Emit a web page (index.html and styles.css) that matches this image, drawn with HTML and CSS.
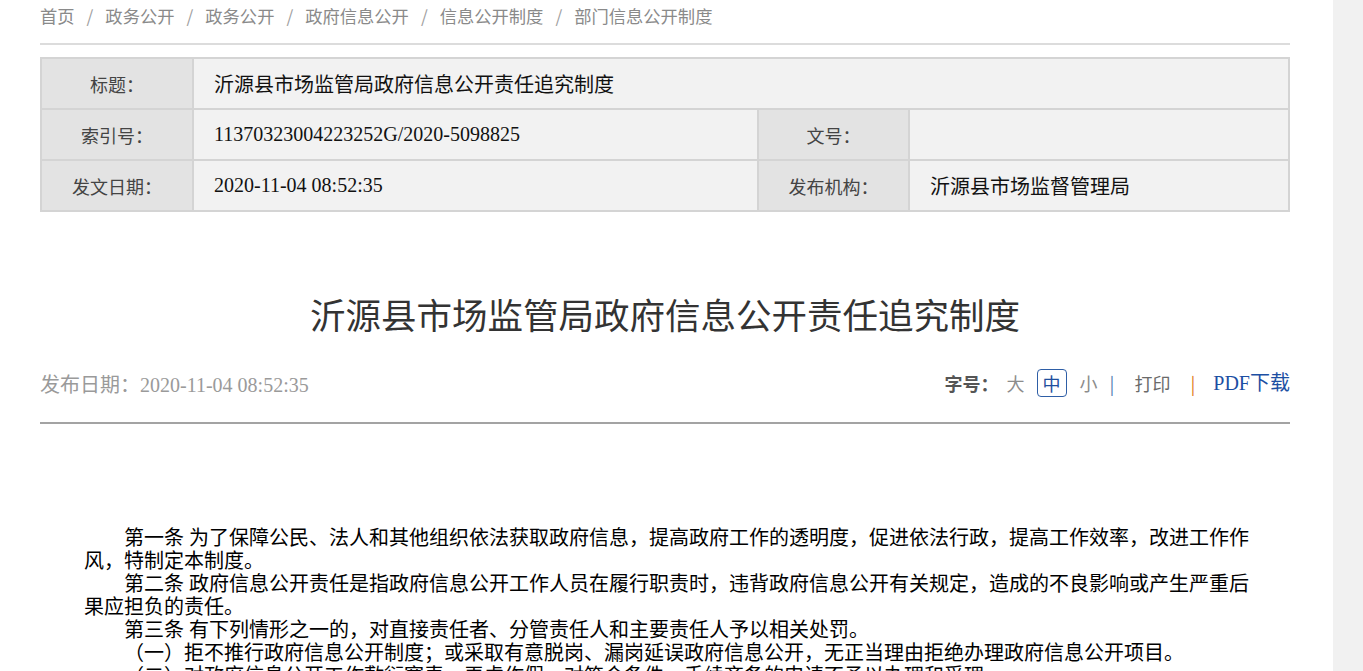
FILE: index.html
```html
<!DOCTYPE html>
<html lang="zh-CN">
<head>
<meta charset="utf-8">
<title>沂源县市场监管局政府信息公开责任追究制度</title>
<link rel="stylesheet" href="styles.css">
</head>
<body>
<div class="page">
  <main class="main">
    <div class="wrap">
      <nav class="crumbs">
        <a href="#">首页</a><span class="sep">/</span><a href="#">政务公开</a><span class="sep">/</span><a href="#">政务公开</a><span class="sep">/</span><a href="#">政府信息公开</a><span class="sep">/</span><a href="#">信息公开制度</a><span class="sep">/</span><a href="#">部门信息公开制度</a>
      </nav>

      <table class="meta">
        <colgroup>
          <col class="c-label"><col class="c-val1"><col class="c-label2"><col>
        </colgroup>
        <tr>
          <th>标题：</th>
          <td colspan="3">沂源县市场监管局政府信息公开责任追究制度</td>
        </tr>
        <tr>
          <th>索引号：</th>
          <td>11370323004223252G/2020-5098825</td>
          <th>文号：</th>
          <td></td>
        </tr>
        <tr>
          <th>发文日期：</th>
          <td>2020-11-04 08:52:35</td>
          <th>发布机构：</th>
          <td>沂源县市场监督管理局</td>
        </tr>
      </table>

      <h1 class="title">沂源县市场监管局政府信息公开责任追究制度</h1>

      <div class="info">
        <div class="date">发布日期：2020-11-04 08:52:35</div>
        <div class="tools">
          <span class="fs-label">字号：</span>
          <a class="fs" href="#">大</a>
          <a class="fs fs-on" href="#">中</a>
          <a class="fs" href="#">小</a>
          <span class="bar">|</span>
          <a class="print" href="#">打印</a>
          <span class="bar bar-o">|</span>
          <a class="pdf" href="#">PDF下载</a>
        </div>
      </div>

      <article class="content">
        <p>第一条 为了保障公民、法人和其他组织依法获取政府信息，提高政府工作的透明度，促进依法行政，提高工作效率，改进工作作风，特制定本制度。</p>
        <p>第二条 政府信息公开责任是指政府信息公开工作人员在履行职责时，违背政府信息公开有关规定，造成的不良影响或产生严重后果应担负的责任。</p>
        <p>第三条 有下列情形之一的，对直接责任者、分管责任人和主要责任人予以相关处罚。</p>
        <p>（一）拒不推行政府信息公开制度；或采取有意脱岗、漏岗延误政府信息公开，无正当理由拒绝办理政府信息公开项目。</p>
        <p>（二）对政府信息公开工作敷衍塞责，弄虚作假，对符合条件、手续齐备的申请不予以办理和受理。</p>
        <p>（三）违反规定收取费用或者谋取不正当利益的。</p>
      </article>
    </div>
  </main>
  <aside class="rail"></aside>
</div>
</body>
</html>
```

FILE: styles.css
```css
html, body {
  margin: 0;
  padding: 0;
  background: #fff;
}

body {
  font-family: "Liberation Serif", "Noto Sans CJK SC", serif;
  color: #222;
  height: 671px;
  overflow: hidden;
}

a {
  text-decoration: none;
  color: inherit;
}

.page {
  display: flex;
  min-height: 671px;
}

.main {
  flex: 1;
  min-width: 0;
}

.rail {
  width: 30px;
  flex: none;
  background: #f1f1f1;
}

.wrap {
  width: 1250px;
  margin-left: 40px;
}

/* breadcrumb */
.crumbs {
  font-family: "Noto Sans CJK SC", sans-serif;
  font-size: 17.3px;
  line-height: 32px;
  color: #8a8a8a;
  padding-bottom: 11px;
  border-bottom: 2px solid #dcdcdc;
  white-space: nowrap;
}

.crumbs .sep {
  padding: 0 12px;
  color: #a0a0a0;
}

/* meta table */
.meta {
  width: 100%;
  margin-top: 12px;
  border-collapse: collapse;
  table-layout: fixed;
  border: 2px solid #d4d4d4;
}

.c-label { width: 152px; }
.c-val1 { width: 565px; }
.c-label2 { width: 151px; }

.meta th,
.meta td {
  height: 49px;
  border: 2px solid #d4d4d4;
  padding: 0;
}

.meta th {
  background: #e3e3e3;
  font-family: "Noto Sans CJK SC", sans-serif;
  font-weight: normal;
  font-size: 18px;
  color: #444;
  text-align: center;
}

.meta td {
  background: #f2f2f2;
  font-size: 20px;
  color: #111;
  padding-left: 20px;
}

/* title */
.title {
  margin: 80px 0 0;
  text-align: center;
  font-size: 35.5px;
  line-height: 50px;
  font-weight: normal;
  color: #333;
}

/* info row */
.info {
  margin-top: 26px;
  display: flex;
  justify-content: space-between;
  align-items: center;
  height: 30px;
  padding-bottom: 24px;
  border-bottom: 2px solid #a3a3a3;
}

.date {
  font-size: 20px;
  color: #9a9a9a;
}

.tools {
  display: flex;
  align-items: center;
  font-family: "Noto Sans CJK SC", sans-serif;
  font-size: 18px;
  line-height: 24px;
}

.fs-label {
  color: #555;
  font-weight: bold;
}

.fs {
  color: #8c8c8c;
  margin-left: 8px;
}

.fs-on {
  margin-left: 12px;
  color: #1f4f9e;
  border: 1.5px solid #2e5ea6;
  border-radius: 4px;
  padding: 1px 5px;
}

.fs-on + .fs {
  margin-left: 13px;
}

.bar {
  color: #5b7fb3;
  margin-left: 12px;
}

.print {
  color: #6a6a6a;
  margin-left: 20px;
}

.bar-o {
  color: #e07b22;
  margin-left: 20px;
}

.pdf {
  margin-left: 18px;
  color: #1c4fa3;
  font-family: "Liberation Serif", "Noto Sans CJK SC", serif;
  font-size: 20px;
}

/* body text */
.content {
  margin-top: 103px;
  padding-left: 44px;
  width: 1166px;
  font-size: 20px;
  line-height: 23px;
  color: #000;
}

.content p {
  margin: 0;
  text-indent: 2em;
}
```
